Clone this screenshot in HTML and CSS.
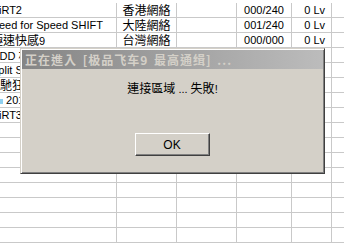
FILE: index.html
```html
<!DOCTYPE html>
<html>
<head>
<meta charset="utf-8">
<link rel="stylesheet" href="styles.css">
</head>
<body>
<div class="grid">
  <div class="cell name">DiRT2</div><div class="cell zone">香港網絡</div><div class="cell"></div><div class="cell num">000/240</div><div class="cell lv">0 Lv</div><div class="cell last"></div>
  <div class="cell name">Need for Speed SHIFT</div><div class="cell zone">大陸網絡</div><div class="cell"></div><div class="cell num">001/240</div><div class="cell lv">0 Lv</div><div class="cell last"></div>
  <div class="cell name"><span class="cj">極速快感</span>9</div><div class="cell zone">台灣網絡</div><div class="cell"></div><div class="cell num">000/000</div><div class="cell lv">0 Lv</div><div class="cell last"></div>
  <div class="cell name">ODD <span class="cj">析域</span></div><div class="cell zone"></div><div class="cell"></div><div class="cell num"></div><div class="cell lv"></div><div class="cell last"></div>
  <div class="cell name">Split Second</div><div class="cell zone"></div><div class="cell"></div><div class="cell num"></div><div class="cell lv"></div><div class="cell last"></div>
  <div class="cell name shift"><span class="cj">飛馳狂飆</span></div><div class="cell zone"></div><div class="cell"></div><div class="cell num"></div><div class="cell lv"></div><div class="cell last"></div>
  <div class="cell name plain"><span class="dot"></span> 2010</div><div class="cell zone"></div><div class="cell"></div><div class="cell num"></div><div class="cell lv"></div><div class="cell last"></div>
  <div class="cell name">DiRT3</div><div class="cell zone"></div><div class="cell"></div><div class="cell num"></div><div class="cell lv"></div><div class="cell last"></div>
  <div class="cell name"></div><div class="cell zone"></div><div class="cell"></div><div class="cell num"></div><div class="cell lv"></div><div class="cell last"></div>
  <div class="cell name"></div><div class="cell zone"></div><div class="cell"></div><div class="cell num"></div><div class="cell lv"></div><div class="cell last"></div>
  <div class="cell name"></div><div class="cell zone"></div><div class="cell"></div><div class="cell num"></div><div class="cell lv"></div><div class="cell last"></div>
  <div class="cell name"></div><div class="cell zone"></div><div class="cell"></div><div class="cell num"></div><div class="cell lv"></div><div class="cell last"></div>
  <div class="cell name"></div><div class="cell zone"></div><div class="cell"></div><div class="cell num"></div><div class="cell lv"></div><div class="cell last"></div>
  <div class="cell name"></div><div class="cell zone"></div><div class="cell"></div><div class="cell num"></div><div class="cell lv"></div><div class="cell last"></div>
  <div class="cell name"></div><div class="cell zone"></div><div class="cell"></div><div class="cell num"></div><div class="cell lv"></div><div class="cell last"></div>
  <div class="cell name"></div><div class="cell zone"></div><div class="cell"></div><div class="cell num"></div><div class="cell lv"></div><div class="cell last"></div>
</div>

<div class="dialog">
  <div class="titlebar">正在進入 [极品飞车9 最高通缉] ...</div>
  <div class="message"><span class="cj">連接區域</span> ... <span class="cj">失敗</span>!</div>
  <div class="actions"><button class="btn">OK</button></div>
</div>
</body>
</html>
```

FILE: styles.css
```css
html, body {
  margin: 0;
  padding: 0;
  background: #ffffff;
  overflow: hidden;
  width: 344px;
  height: 245px;
}

body {
  position: relative;
  font-family: "Liberation Sans", "Noto Sans CJK TC", sans-serif;
  font-size: 11px;
  color: #000;
}

.cj {
  font-family: "Noto Sans CJK TC", sans-serif;
  font-size: 12px;
}

.grid {
  display: grid;
  grid-template-columns: 117px 60px 60px 55px 40px 1fr;
  padding-top: 3px;
}

.cell {
  box-sizing: border-box;
  height: 15px;
  line-height: 14px;
  border-right: 1px solid #c9c9c9;
  border-bottom: 1px solid #c9c9c9;
  white-space: nowrap;
  overflow: hidden;
}

.cell.last {
  border-right: none;
}

.name {
  text-indent: -9px;
}

.name.shift {
  text-indent: -12px;
}

.name.plain {
  text-indent: 0;
}

.dot {
  display: inline-block;
  width: 3px;
  height: 5px;
  background: #8fd0f0;
  vertical-align: middle;
}

.zone {
  text-align: center;
  font-family: "Noto Sans CJK TC", sans-serif;
  font-size: 12px;
}

.num {
  text-align: center;
}

.lv {
  text-align: right;
  padding-right: 6px;
}

.dialog {
  position: absolute;
  left: 20px;
  top: 48px;
  width: 305px;
  height: 126px;
  box-sizing: border-box;
  background: #d4d0c8;
  border: 1px solid;
  border-color: #d4d0c8 #404040 #404040 #d4d0c8;
  box-shadow: inset 1px 1px #ffffff, inset -1px -1px #808080;
  padding: 1px;
  display: flex;
  flex-direction: column;
}

.titlebar {
  height: 19px;
  line-height: 19px;
  padding-left: 3px;
  background: linear-gradient(to right, #858585, #bcbcbc);
  color: #d4d0c8;
  font-family: "Noto Sans CJK TC", sans-serif;
  font-weight: bold;
  font-size: 12px;
  letter-spacing: 1px;
  word-spacing: 2px;
  white-space: nowrap;
  overflow: hidden;
}

.message {
  margin-top: 11px;
  text-align: center;
  line-height: 16px;
  font-size: 11px;
}

.actions {
  margin-top: 36px;
  display: flex;
  justify-content: center;
}

.btn {
  width: 75px;
  height: 23px;
  box-sizing: border-box;
  background: #d4d0c8;
  border: 1px solid;
  border-color: #ffffff #404040 #404040 #ffffff;
  box-shadow: inset -1px -1px #808080;
  font-family: "Liberation Sans", sans-serif;
  font-size: 12px;
  color: #000;
  padding: 0;
  margin-right: 1px;
}
```
